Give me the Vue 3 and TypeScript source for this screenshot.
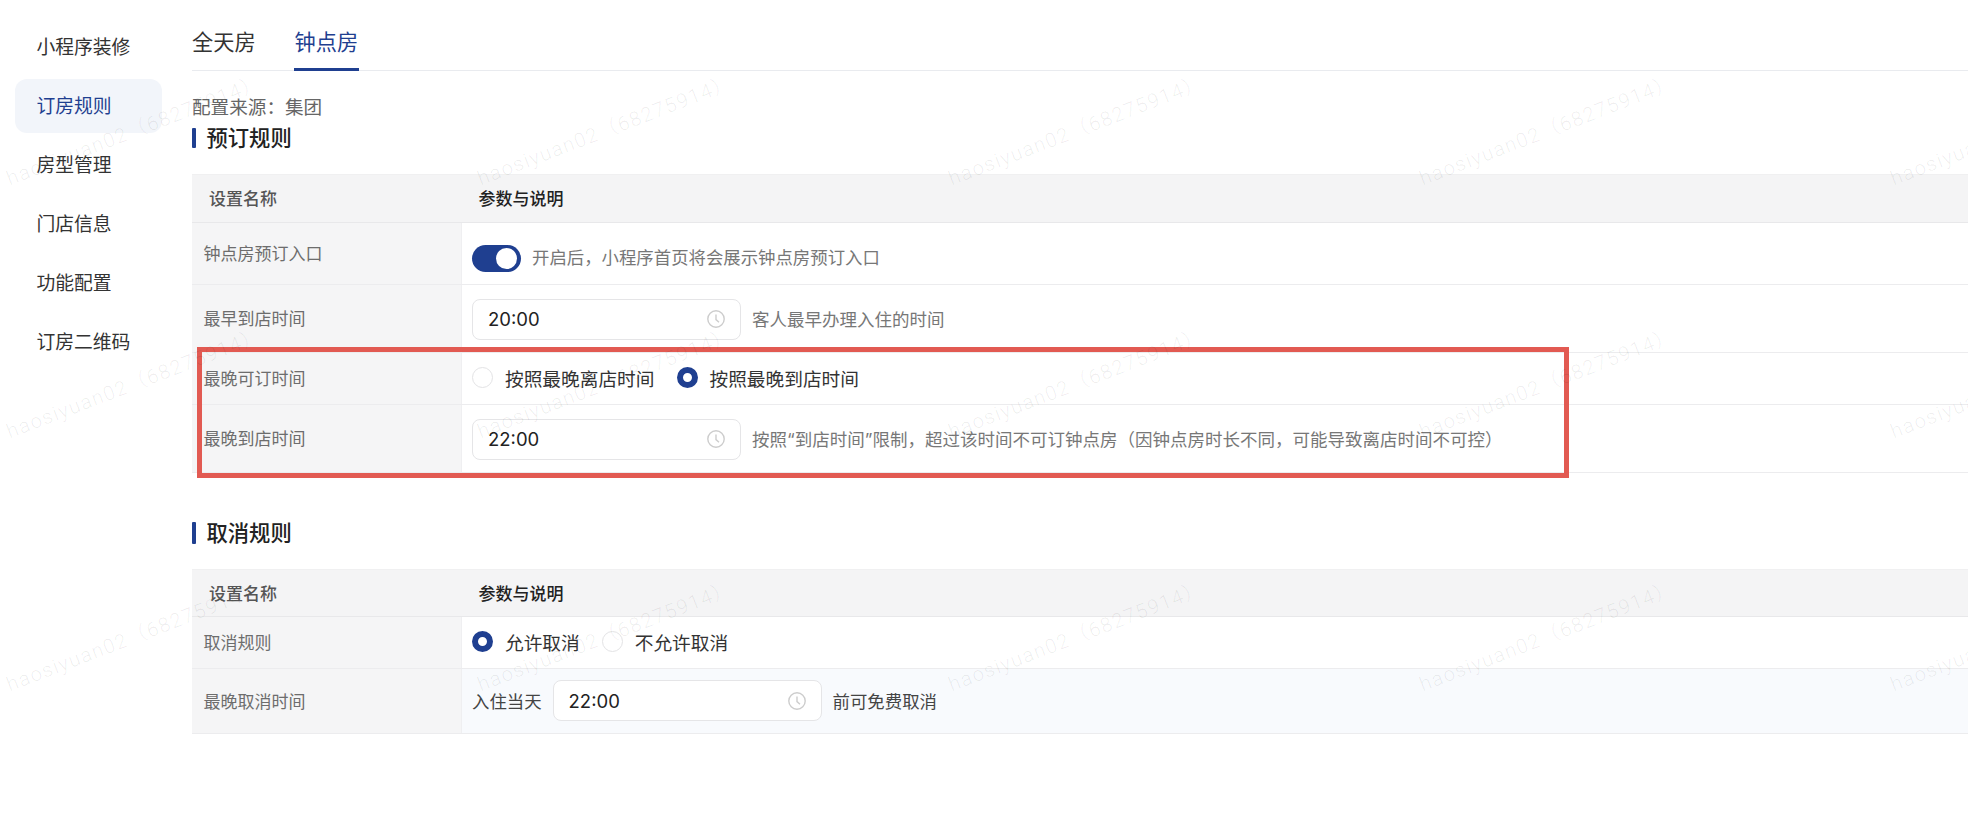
<script setup lang="ts">
interface Opt { label: string; on: boolean }

const menu: string[] = ['小程序装修', '订房规则', '房型管理', '门店信息', '功能配置', '订房二维码']
const marks: number[] = Array.from({ length: 15 }, (_, i) => i)
const latestOpts: Opt[] = [
  { label: '按照最晚离店时间', on: false },
  { label: '按照最晚到店时间', on: true },
]
const cancelOpts: Opt[] = [
  { label: '允许取消', on: true },
  { label: '不允许取消', on: false },
]
</script>

<template>
  <div class="page">
    <aside class="side">
      <div v-for="(m, i) in menu" :key="m" class="side-item" :class="{ active: i === 1 }">{{ m }}</div>
    </aside>

    <main class="main">
      <nav class="tabs">
        <span class="tab">全天房</span>
        <span class="tab active">钟点房</span>
      </nav>

      <p class="source">配置来源：集团</p>

      <h2 class="title first">预订规则</h2>
      <section class="table">
        <div class="head">
          <div class="head-name">设置名称</div>
          <div class="head-param">参数与说明</div>
        </div>
        <div class="row r62">
          <div class="label">钟点房预订入口</div>
          <div class="cell toggle-cell">
            <span class="switch"><i></i></span>
            <span class="hint">开启后，小程序首页将会展示钟点房预订入口</span>
          </div>
        </div>
        <div class="row r68">
          <div class="label">最早到店时间</div>
          <div class="cell shift">
            <span class="time">
              <span>20:00</span>
              <svg class="clock" viewBox="0 0 18 18"><circle cx="9" cy="9" r="8.2" /><path d="M9 4.4V9.6L12 12.2" /></svg>
            </span>
            <span class="hint">客人最早办理入住的时间</span>
          </div>
        </div>
        <div class="row r52">
          <div class="label">最晚可订时间</div>
          <div class="cell radios wide">
            <label v-for="o in latestOpts" :key="o.label" class="radio">
              <i class="dot" :class="{ on: o.on }"></i>{{ o.label }}
            </label>
          </div>
        </div>
        <div class="row r68">
          <div class="label">最晚到店时间</div>
          <div class="cell shift">
            <span class="time">
              <span>22:00</span>
              <svg class="clock" viewBox="0 0 18 18"><circle cx="9" cy="9" r="8.2" /><path d="M9 4.4V9.6L12 12.2" /></svg>
            </span>
            <span class="hint">按照“到店时间”限制，超过该时间不可订钟点房（因钟点房时长不同，可能导致离店时间不可控）</span>
          </div>
        </div>
      </section>

      <h2 class="title second">取消规则</h2>
      <section class="table tight">
        <div class="head short">
          <div class="head-name">设置名称</div>
          <div class="head-param">参数与说明</div>
        </div>
        <div class="row r52">
          <div class="label">取消规则</div>
          <div class="cell radios">
            <label v-for="o in cancelOpts" :key="o.label" class="radio">
              <i class="dot" :class="{ on: o.on }"></i>{{ o.label }}
            </label>
          </div>
        </div>
        <div class="row r65">
          <div class="label">最晚取消时间</div>
          <div class="cell tinted">
            <span class="plain">入住当天</span>
            <span class="time">
              <span>22:00</span>
              <svg class="clock" viewBox="0 0 18 18"><circle cx="9" cy="9" r="8.2" /><path d="M9 4.4V9.6L12 12.2" /></svg>
            </span>
            <span class="plain">前可免费取消</span>
          </div>
        </div>
      </section>
    </main>

    <div class="highlight"></div>

    <div class="marks">
      <div v-for="n in marks" :key="n" class="mark-cell"><span class="mark">haosiyuan02（68275914）</span></div>
    </div>
  </div>
</template>

<style>
html,
body {
  margin: 0;
  background: #fff;
  overflow: hidden;
}
</style>

<style scoped>
.page {
  position: relative;
  display: flex;
  width: 1968px;
  height: 824px;
  overflow: hidden;
  background: #fff;
  color: #333;
  font-family: Inter, "Noto Sans CJK SC", sans-serif;
}

.side {
  flex: 0 0 192px;
  box-sizing: border-box;
  padding: 20px 30px 0 15px;
  display: flex;
  flex-direction: column;
  gap: 5px;
}
.side-item {
  height: 54px;
  line-height: 56px;
  padding-left: 21.5px;
  border-radius: 12px;
  font-size: 18.8px;
  color: #333;
}
.side-item.active {
  background: #f2f5fa;
  color: #1f3f90;
}

.main {
  flex: 1;
  min-width: 0;
}

.tabs {
  box-sizing: border-box;
  height: 71px;
  display: flex;
  gap: 38px;
  border-bottom: 1px solid #e9ebef;
}
.tab {
  box-sizing: border-box;
  height: 71px;
  padding-top: 27px;
  line-height: 30px;
  font-size: 21.2px;
  color: #333;
  border-bottom: 3px solid transparent;
}
.tab.active {
  padding-left: 1px;
  padding-right: 1px;
  color: #1f3f90;
  border-bottom-color: #1f3f90;
}

.source {
  margin: 24px 0 0;
  line-height: 24px;
  font-size: 18.6px;
  color: #666;
}

.title {
  position: relative;
  margin: 0;
  padding-left: 14.5px;
  font-size: 21.3px;
  font-weight: 500;
  color: #222;
}
.title::before {
  content: "";
  position: absolute;
  left: 0;
  top: 0;
  bottom: 0;
  width: 4px;
  border-radius: 1px;
  background: #1f3f90;
}
.title.first {
  margin-top: 9px;
  height: 20px;
  line-height: 20px;
}
.title.second {
  margin-top: 49px;
  height: 22px;
  line-height: 22px;
}

.table {
  margin-top: 26px;
}
.table.tight {
  margin-top: 25px;
}

.head {
  box-sizing: border-box;
  height: 49px;
  display: flex;
  align-items: center;
  background: #f4f4f5;
  border-top: 1px solid #f0f0f1;
  border-bottom: 1px solid #e8e8ea;
  font-size: 17px;
  font-weight: 500;
}
.head.short {
  height: 48px;
}
.head-name {
  flex: 0 0 270px;
  box-sizing: border-box;
  padding-left: 17px;
  padding-bottom: 2px;
  color: #555;
}
.head-param {
  padding-left: 16.5px;
  padding-bottom: 2px;
  color: #222;
}

.row {
  box-sizing: border-box;
  display: flex;
  border-bottom: 1px solid #ececee;
}
.r62 { height: 62px; }
.r68 { height: 68px; }
.r52 { height: 52px; }
.r65 { height: 65px; }

.label {
  flex: 0 0 270px;
  box-sizing: border-box;
  display: flex;
  align-items: center;
  padding-left: 11.5px;
  padding-bottom: 2px;
  background: #f5f5f6;
  border-right: 1px solid #efeff1;
  font-size: 17px;
  color: #6d6d6d;
}

.cell {
  flex: 1;
  min-width: 0;
  display: flex;
  align-items: center;
  padding-left: 10px;
}
.toggle-cell {
  padding-top: 9px;
  gap: 11px;
}
.toggle-cell .hint {
  font-size: 17.4px;
  margin-top: -3px;
}
.shift {
  padding-top: 1px;
  gap: 11px;
}
.shift .hint {
  margin-top: -1px;
}
.tinted {
  gap: 11px;
  padding-bottom: 1px;
  background: #f8fafd;
}

.switch {
  position: relative;
  width: 49px;
  height: 27px;
  border-radius: 14px;
  background: #1f3f90;
}
.switch i {
  position: absolute;
  right: 4px;
  top: 3px;
  width: 21px;
  height: 21px;
  border-radius: 50%;
  background: #fff;
}

.hint {
  font-size: 17.5px;
  color: #777;
  white-space: nowrap;
}
.plain {
  font-size: 17.4px;
  color: #444;
  white-space: nowrap;
}

.time {
  box-sizing: border-box;
  flex: 0 0 269px;
  height: 41px;
  display: flex;
  align-items: center;
  justify-content: space-between;
  padding: 0 15px 0 15px;
  background: #fff;
  border: 1px solid #e5e5e7;
  border-radius: 8px;
  font-size: 18.5px;
  color: #222;
}
.clock {
  width: 18px;
  height: 18px;
  fill: none;
  stroke: #cdcdcd;
  stroke-width: 1.4;
}

.radios {
  gap: 22px;
  padding-bottom: 2px;
}
.radios.wide {
  padding-bottom: 3px;
}
.radio {
  display: flex;
  align-items: center;
  gap: 12px;
  font-size: 18.7px;
  color: #333;
  white-space: nowrap;
}
.dot {
  box-sizing: border-box;
  width: 21px;
  height: 21px;
  border-radius: 50%;
  border: 1px solid #e3e3e5;
  background: #fff;
}
.dot.on {
  border: 6.5px solid #1f3f90;
}

.highlight {
  position: absolute;
  left: 197px;
  top: 347px;
  box-sizing: border-box;
  width: 1372px;
  height: 131px;
  border: 5.5px solid #e25a52;
}

.marks {
  position: absolute;
  inset: 0 0 auto 12px;
  display: grid;
  grid-template-columns: repeat(5, 471px);
  grid-auto-rows: 253px;
  pointer-events: none;
}
.mark-cell {
  position: relative;
}
.mark {
  position: absolute;
  left: 0;
  top: 162px;
  transform: rotate(-21deg);
  transform-origin: left bottom;
  font-family: Roboto, "Noto Sans CJK SC", sans-serif;
  font-weight: 300;
  font-size: 20px;
  letter-spacing: 1.5px;
  color: rgba(0, 0, 0, 0.07);
  white-space: nowrap;
}
</style>
